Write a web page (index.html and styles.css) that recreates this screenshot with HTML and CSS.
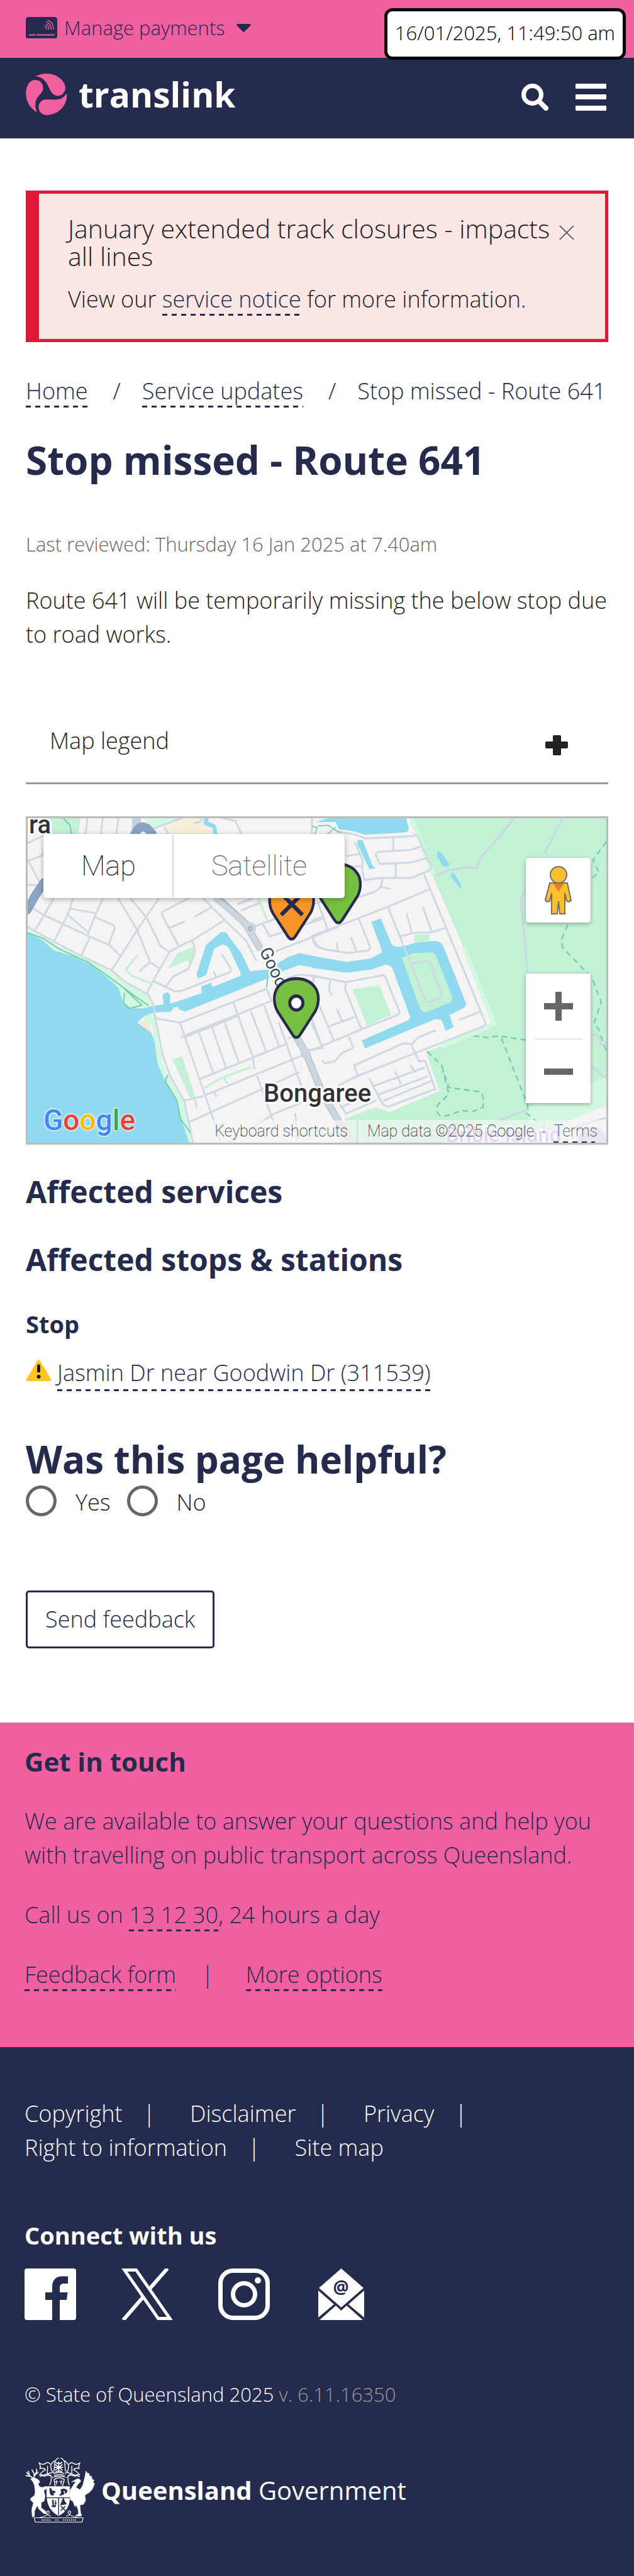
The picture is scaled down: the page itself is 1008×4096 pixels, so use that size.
FILE: index.html
```html
<!DOCTYPE html>
<html lang="en">
<head>
<meta charset="utf-8">
<meta name="viewport" content="width=device-width, initial-scale=1">
<title>Stop missed - Route 641 | Translink</title>
<link rel="stylesheet" href="styles.css">
</head>
<body>
<div class="topbar">
  <button class="payments" type="button">
    <svg class="payments-card" viewBox="0 0 176 122" aria-hidden="true">
      <rect width="176" height="122" rx="15" fill="#252b4d"/>
      <g fill="none" stroke="#f060a1" stroke-width="5" stroke-linecap="round">
        <path d="M20 100H52M64 100H158" stroke-width="7"/>
        <path d="M106 52q12 4 10 17M112 40q18 7 16 29M117 29q26 10 24 40M122 18q36 14 32 50"/>
      </g>
    </svg>
    <span>Manage payments</span>
    <svg class="payments-caret" viewBox="0 0 23 13" aria-hidden="true"><path d="M2 0H21Q24 0 22 3L13 12Q11.500 14 10 12L1 3Q-1 0 2 0Z" fill="#252b4d"/></svg>
  </button>
  <time class="clock">16/01/2025, 11:49:50 am</time>
</div>

<header class="header">
  <a class="brand" href="#">
    <svg class="brand-mark" viewBox="24 362 232 234" aria-hidden="true" fill="#f060a1">
      <path d="M78 380C95 368 115 362 140 362C200 362 248 405 246 445C244 470 225 488 200 487C175 485 163 462 152 438C138 405 115 378 78 380Z"/>
      <path d="M76 398C105 398 122 420 121 445C119 470 96 482 84 505C73 528 76 555 86 580C50 560 24 520 24 478C24 435 40 398 76 398Z"/>
      <path d="M254 474C262 540 205 596 140 596C112 595 95 575 95 550C96 525 115 508 140 507C185 507 225 520 254 474Z"/>
    </svg>
    <span>translink</span>
  </a>
  <div class="header-tools">
    <button type="button" aria-label="Search">
      <svg class="icon-search" viewBox="0 0 43 43" fill="none" stroke="#fff"><circle cx="17.500" cy="17.500" r="14" stroke-width="7"/><path d="M28 28L39 39" stroke-width="8" stroke-linecap="round"/></svg>
    </button>
    <button type="button" aria-label="Menu">
      <svg class="icon-menu" viewBox="0 0 49 43" fill="#fff"><rect width="49" height="8" rx="1"/><rect y="17" width="49" height="8" rx="1"/><rect y="35" width="49" height="8" rx="1"/></svg>
    </button>
  </div>
</header>

<main class="main">
  <section class="alert" role="alert">
    <div class="alert-body">
      <p class="alert-title">January extended track closures - impacts all lines</p>
      <p>View our <a class="link" href="#">service notice</a> for more information.</p>
    </div>
    <button class="alert-close" type="button" aria-label="Close">
      <svg viewBox="0 0 24 26" fill="none"><path d="M1 4L23 25M23 4L1 25" stroke="#fff" stroke-width="2"/><path d="M1 1L23 23M23 1L1 23" stroke="#666" stroke-width="2"/></svg>
    </button>
  </section>

  <nav aria-label="Breadcrumb">
    <ol class="crumbs">
      <li><a class="link" href="#">Home</a></li>
      <li><a class="link" href="#">Service updates</a></li>
      <li>Stop missed - Route 641</li>
    </ol>
  </nav>

  <h1>Stop missed - Route 641</h1>
  <p class="reviewed">Last reviewed: Thursday 16 Jan 2025 at 7.40am</p>
  <p class="intro">Route 641 will be temporarily missing the below stop due to road works.</p>

  <button class="legend" type="button" aria-expanded="false">
    <span>Map legend</span>
    <svg viewBox="0 0 36 32" aria-hidden="true" fill="#222"><rect x="12" width="13" height="32" rx="2"/><rect y="10" width="36" height="11" rx="2"/></svg>
  </button>

  <section class="map" aria-label="Map">
    <svg class="map-canvas" viewBox="3 3 920 516" preserveAspectRatio="xMidYMid slice" aria-hidden="true">
      <defs>
        <path id="pin" d="M0 160C-10 160-16 152-22 142L-92 40C-112 5-112-40-92-66C-72-94-40-108 0-108S72-94 92-66C112-40 112 5 92 40L22 142C16 152 10 160 0 160Z"/>
      </defs>
      <rect width="926" height="522" fill="#f5f3f3"/>
      <g transform="translate(-41 -15.500) scale(.3272 .349)" fill="none" stroke-linecap="round" stroke-linejoin="round">
        <!-- parks and sand -->
        <g fill="#c3f1d5">
          <path d="M225 40H395L380 130H260Z"/>
          <path d="M600 840L620 825L700 855L740 905L690 908L655 922L615 918L600 890Z"/>
          <path d="M862 668L942 640V680L918 715L910 702L818 738Z"/>
          <path d="M838 1152L885 1138L950 1325L925 1328Z"/>
        </g>
        <path d="M665 680L612 742L640 770L725 802" stroke="#c3f1d5" stroke-width="10"/>
        <path d="M1255 420L1295 510M995 1280L1080 1235L1215 1188M1090 1240L1102 1260" stroke="#c3f1d5" stroke-width="10"/>
        <path d="M690 40H960L735 102Z" fill="#d3f8e2"/>
        <path d="M805 90L900 50H975L1030 110L1000 135H825Z" fill="#f7efdc"/>
        <path d="M133 560L260 625L420 690L590 785L720 855L745 920L770 1080L800 1200L890 1340L945 1550H880L870 1400L760 1200L740 1000L600 890L570 820L430 715L270 655L133 590Z" fill="#d3f8e2"/>
        <path d="M133 575L205 608L262 655L350 680L450 725L520 778L575 825L598 890L625 918L690 920L745 908L840 895L980 850L978 820L1025 802L1032 822L1165 772Q1172 765 1168 755L1118 655Q1105 628 1078 628L1040 648L1002 768L962 784L955 765L1000 632L1070 575Q1085 568 1100 575L1175 672L1215 750L1300 742L1400 685L1455 667L1568 690V740L1455 722L1350 758L1300 783L900 934L870 925L865 912L845 915L830 935L750 938L700 955L668 985L735 1030L752 1075L765 1170L800 1245L865 1350L880 1420L920 1535L925 1560H120Z" fill="#8fdaee"/>
        <path d="M678 985L700 972L722 985L735 1030L715 1018Z" fill="#f5e8cc"/>
        <path d="M790 855L815 845L828 860L824 905H795Z" fill="#8fdaee"/>
        <path d="M1005 40L1000 75L1040 90L1048 130" stroke="#8fdaee" stroke-width="20"/>
        <!-- forest and lagoon to the east -->
        <g transform="translate(1516 0)">
          <path d="M483 40H1450V1560H120L160 1422L310 1370L375 1392L620 1295L553 1118L893 995L752 650L740 650L580 300Z" fill="#c3f1d5"/>
          <path d="M483 50L585 300M742 650L885 990L640 1090" stroke="#d3f8e2" stroke-width="22"/>
          <path d="M1040 1370L1440 1230V1370L1120 1470L1050 1420Z" fill="#d3f8e2"/>
          <path d="M1200 1450L1440 1360V1560H1050Z" fill="#f5f3f3"/>
          <path d="M20 70L110 45H455L470 95Q470 115 450 118L260 128L190 110L130 103L115 70Z" fill="#8fdaee"/>
          <path d="M222 152H245L295 270L310 280L280 286L220 170Z" fill="#8fdaee"/>
          <path d="M608 205Q625 200 640 225L670 265L660 275L635 272L608 225ZM675 302Q690 300 700 318L725 355V378L680 325Z" fill="#8fdaee"/>
          <path d="M0 680L170 708L285 692L340 665L338 650L288 525L335 510L388 630Q410 645 450 635L500 620L600 612Q630 615 640 640L748 895Q750 910 735 918L668 950L688 1005L650 1022L630 972L600 968L258 1102L242 1065L470 972L478 960L390 735Q375 718 350 722L290 742L170 757L0 735Z" fill="#8fdaee"/>
          <path d="M437 690L490 668L580 664Q598 668 605 685L683 870Q683 888 665 895L555 937Q535 940 525 920Z" fill="#c3f1d5"/>
          <path d="M497 585L570 582V612L497 618ZM197 832L328 816L385 950L267 998Z" fill="#c3f1d5"/>
        </g>
        <!-- streets -->
        <g stroke="#cfd9e4" stroke-width="9">
          <path d="M133 168L215 130M133 250L205 222L215 190M133 240L190 340M133 355L180 360M133 548L260 615L395 680L540 745L610 800L718 855L742 895L755 965L790 1130L825 1225L895 1340L940 1540"/>
          <path d="M425 50L415 130M500 50L490 130M575 50L565 130M645 50V120M730 105L890 50M800 95L820 130M945 75L970 70L990 50M1070 50L1145 65L1175 130M1516 50V130"/>
          <path d="M155 460L215 495L430 590L530 630L585 680M170 565L260 420M260 618L330 490L355 420M340 465L460 485M325 490L428 572M428 580L460 500L500 420M465 505L550 540Q560 545 555 560L530 625M395 678L435 600M543 745L665 565L770 420M575 420L665 560L730 710L770 735M635 420L715 510L780 635L820 662M715 850L740 800L825 660L950 600L1095 515M790 480L1020 365M790 480L785 490L865 630M825 552L895 525M950 500L1025 460M990 420L1090 515L1195 610L1245 700M930 610Q955 650 945 670L915 740L840 775L808 820M745 795L850 842L880 840L1115 755Q1125 748 1120 735L1080 675M680 748L725 712M1040 755L1050 775"/>
          <path d="M760 965L875 985L1295 830L1320 885L880 1050M875 985L1035 1420L1070 1530M905 1048L1155 955M965 1025L1035 1210M1030 1005L1098 1190M1092 985L1160 1165M1135 895L1230 1145L1235 1195M1220 935L1292 1112M1285 910L1355 1090M975 1240L1395 1080M1355 985L1470 1290M990 1318L1230 1225L1480 1130M895 1340L990 1318M925 1435L1450 1212M1250 1230L1345 1480M1040 1300L1050 1320M945 1325L955 1368M1110 1530L1330 1400L1568 1310M1400 1055L1440 1045M1435 1400L1445 1520"/>
          <path d="M1155 445L1225 420M1175 472L1260 440M1240 545L1568 430M1280 540L1310 592L1568 510M1340 660L1640 550M1520 600Q1530 645 1568 645M1400 780L1460 765L1568 780M1525 780L1480 880M1480 880L1568 1100L1500 1110"/>
        </g>
        <g transform="translate(1516 0)" stroke="#cfd9e4" stroke-width="9">
          <path d="M130 115L200 125L260 145L490 135Q510 120 520 145L580 270Q580 290 560 295L480 325L340 325L255 335L245 290V240L210 165M170 225L235 215M180 275L245 270M395 145V198M320 207L480 197L530 182M320 207Q305 215 315 235L330 262L480 255L555 235M407 262V322M340 330Q345 370 300 390L170 430M340 368L378 374"/>
          <path d="M0 590L360 460L575 375M545 310L845 990Q845 998 830 1002L510 1120L215 1230L130 1270M370 460L480 715M480 715L560 702Q572 705 575 715L630 855Q630 868 615 873L570 892Q555 890 550 880L480 715M460 490L485 575M540 462L582 570M432 592L490 576L580 573L650 552M230 515L282 640Q282 655 270 657L175 667L60 650Q20 640 5 600M190 597L215 655M120 622L125 655M30 440L75 555M0 520L45 505"/>
          <path d="M0 770L165 800L345 768Q355 770 360 785L425 935Q425 945 415 950L240 1015L0 1110M165 800L160 830L240 1015M90 795Q75 830 95 858M10 780L0 830M20 870L105 1065M85 1000L205 960M122 925L145 975M0 990L45 1085M180 1050L200 1100L150 1120L110 1160L65 1170L50 1158M720 970L815 935M205 1180L440 1080Q475 1075 485 1090L520 1160M205 1180L225 1230M480 1085L520 1050L600 1020"/>
          <path d="M280 1240L340 1350Q355 1370 375 1366L590 1290M520 1160L550 1160L600 1290M330 1310L560 1230M350 1340L580 1250M295 1275L545 1190M405 1210L430 1260M480 1180L500 1210M120 1330L165 1400L310 1340M140 1370L290 1310M1280 1460L1440 1415"/>
          <path d="M980 50Q940 110 850 200L820 235L800 280L740 277L660 292L610 312M1220 50L1130 210M1045 370Q1010 410 1018 460L1050 770M1350 1180L1440 1245M1350 1050Q1390 1020 1400 1065T1440 1060M880 1440L1050 1380" stroke="#cbd6e2"/>
        </g>
        <!-- main road -->
        <path d="M1060 420L1190 530L1260 640M1440 1050L1485 1120L1568 1310L1680 1490L1730 1550" stroke="#aeb9c6" stroke-width="34"/>
        <path d="M1050 420L1190 530L1260 640M1440 1050L1485 1120L1568 1310L1680 1490L1730 1550" stroke="#cbd5df" stroke-width="28"/>
        <path d="M665 50L668 110" stroke="#c4d0df" stroke-width="38"/>
        <circle cx="1216" cy="555" r="28" fill="#cbd5df"/><circle cx="1216" cy="555" r="8" stroke="#9aa8ba" stroke-width="5"/>
        <circle cx="1485" cy="1123" r="25" fill="#cbd5df"/>
        <path d="M655 125Q690 60 740 125M133 470L175 400L215 345" stroke="#8ba4c0" stroke-width="42"/>
        <!-- walking tracks -->
        <g stroke="#76cdae" stroke-width="6">
          <path d="M133 575L210 600L290 650L430 710L520 770L600 825L650 860L720 905M605 850L600 895L630 920L690 905L645 865L610 835M815 1225Q795 1250 815 1270L860 1340L875 1420L925 1485M305 50L340 85L348 130M1300 785L1296 820"/>
        </g>
        <g transform="translate(1516 0)" stroke="#76cdae" stroke-width="7">
          <path d="M0 90L25 95L15 125M30 88L80 85L110 105L140 120M115 95L75 125" stroke-width="5"/>
          <path stroke-dasharray="27 19" stroke-linecap="butt" d="M560 1115L630 1180L665 1280L820 1300Q840 1330 830 1370L780 1390L730 1385L640 1412Q600 1410 610 1360L665 1310L635 1200M785 1045L850 1052L910 1045L1045 1065M920 1055L1050 1365L1040 1395L1110 1450M1430 160L1365 245L1395 300L1355 330M1243 538L1210 610L1220 645L1360 780L1405 890L1370 990L1390 1010L1440 1140"/>
        </g>
        <circle cx="2878" cy="1528" r="70" fill="#d3bbfa"/>
      </g>
      <g class="map-labels">
        <text x="5" y="27" class="place">ra</text>
        <text x="378" y="454" class="place">Bongaree</text>
        <text class="street" transform="translate(371 214) rotate(64)">Good</text>
        <text x="668" y="518" class="poi">Bribie Island</text>
      </g>
      <g transform="translate(-41 -15.500) scale(.3272 .349)" stroke="#252b4d" stroke-width="13">
        <use href="#pin" x="1644" y="370" fill="#78c041"/>
        <use href="#pin" x="1417" y="444" fill="#f99527"/>
        <path d="M1366 396L1470 494M1470 396L1366 494" stroke-width="19"/>
        <use href="#pin" x="1440" y="892" fill="#78c041"/>
        <circle cx="1440" cy="895" r="32" fill="#fff" stroke-width="15"/>
      </g>
    </svg>

    <div class="map-types">
      <button type="button">Map</button>
      <button type="button">Satellite</button>
    </div>

    <div class="map-tools">
      <button class="pegman" type="button" aria-label="Street View">
        <svg viewBox="0 0 44 78" fill="#fdbf2d" stroke="#707070" stroke-width="2">
          <path d="M8 27H36L42 54Q40 58 35 56L32 43V76H24L22 56L20 76H11V43L8 56Q3 58 1 54Z"/>
          <path d="M14 28H30L22 41Z" fill="#e17f30" stroke="none"/>
          <circle cx="22" cy="14" r="13"/>
        </svg>
      </button>
      <div class="zoom">
        <button type="button" aria-label="Zoom in"><svg viewBox="0 0 46 46" fill="#666"><path d="M0 18H18V0H28V18H46V28H28V46H18V28H0Z"/></svg></button>
        <button type="button" aria-label="Zoom out"><svg viewBox="0 0 46 46" fill="#666"><path d="M0 18H46V28H0Z"/></svg></button>
      </div>
    </div>

    <div class="google">
      <span class="g-blue">G</span><span class="g-red">o</span><span class="g-yellow">o</span><span class="g-blue">g</span><span class="g-green">l</span><span class="g-red">e</span>
    </div>
    <div class="map-credits">
      <button type="button">Keyboard shortcuts</button>
      <span>Map data ©2025 Google</span>
      <a class="link" href="#">Terms</a>
    </div>
  </section>

  <h2>Affected services</h2>
  <h2>Affected stops &amp; stations</h2>
  <h3>Stop</h3>
  <ul class="stops">
    <li>
      <svg viewBox="0 0 41 34" aria-hidden="true"><path d="M18 2Q20.500-1.500 23 2L40 31Q41 34 38 34H3Q0 34 1 31Z" fill="#ffc425"/><path d="M20.500 10V18" stroke="#111" stroke-width="5" stroke-linecap="round"/><circle cx="20.500" cy="27" r="3" fill="#111"/></svg>
      <a class="link" href="#">Jasmin Dr near Goodwin Dr (311539)</a>
    </li>
  </ul>

  <form class="feedback">
    <fieldset>
      <legend>Was this page helpful?</legend>
      <div class="choices">
        <input type="radio" name="helpful" id="helpful-yes"><label for="helpful-yes">Yes</label>
        <input type="radio" name="helpful" id="helpful-no"><label for="helpful-no">No</label>
      </div>
    </fieldset>
    <button class="send" type="button">Send feedback</button>
  </form>
</main>

<section class="contact">
  <h2>Get in touch</h2>
  <p>We are available to answer your questions and help you with travelling on public transport across Queensland.</p>
  <p>Call us on <a class="link" href="#">13 12 30</a>, 24 hours a day</p>
  <ul class="contact-links">
    <li><a class="link" href="#">Feedback form</a></li>
    <li><a class="link" href="#">More options</a></li>
  </ul>
</section>

<footer class="footer">
  <ul class="footer-links">
    <li><a href="#">Copyright</a></li>
    <li><a href="#">Disclaimer</a></li>
    <li><a href="#">Privacy</a></li>
    <li><a href="#">Right to information</a></li>
    <li><a href="#">Site map</a></li>
  </ul>
  <h2>Connect with us</h2>
  <div class="social">
    <a href="#" aria-label="Facebook"><svg viewBox="0 0 82 82"><rect width="82" height="82" rx="4" fill="#fff"/><path d="M44 82V50H33V38H44V30C44 18 50 12.500 60 12.500H69V24H63C58 24 56 26 56 31V38H68.500L67 50H56V82Z" fill="#252b4d"/></svg></a>
    <a href="#" aria-label="X"><svg viewBox="0 0 84 84" fill="none" stroke="#fff" stroke-width="5"><path d="M5 2.500H24L79 81.500H60Z"/><path d="M75 0L46 33M3 84L35 47" stroke-width="6"/></svg></a>
    <a href="#" aria-label="Instagram"><svg viewBox="0 0 82 82" fill="none" stroke="#fff" stroke-width="7"><rect x="3.500" y="3.500" width="75" height="75" rx="20"/><circle cx="41" cy="41" r="17.500"/><circle cx="63" cy="19" r="5" fill="#fff" stroke="none"/></svg></a>
    <a href="#" aria-label="Email newsletter"><svg viewBox="-5 0 82 82" fill="#fff"><path d="M36.500 0L72 31L36.500 62L1 31ZM0 35L25 57L0 78ZM73 35L48 57L73 78ZM2 82L28 59L36.500 67L45 59L71 82Z"/><text class="at" x="36" y="40" text-anchor="middle">@</text></svg></a>
  </div>
  <p class="copyright">© State of Queensland 2025 <span>v. 6.11.16350</span></p>
  <a class="government" href="#">
    <svg viewBox="12 20 396 372" aria-hidden="true" fill="#fff" stroke="#fff" stroke-linecap="round" stroke-linejoin="round">
      <!-- mantling and helmet -->
      <g fill="none" stroke-width="5">
        <path d="M200 25Q184 34 180 50L176 98M214 25Q232 34 236 50L240 98M92 52Q112 68 130 54Q144 44 158 62L160 92L178 112M92 52Q104 76 96 84Q120 78 128 92Q112 96 94 120Q120 116 118 128Q142 118 160 122M322 52Q300 68 284 54Q270 46 258 62L256 92L240 112M322 52Q310 76 318 84Q294 78 286 92Q302 96 320 120Q296 116 296 128Q272 118 256 122M140 70L138 112L168 136M276 70V110L248 136M160 60L178 40M254 60L238 40M98 128L170 104M320 130L246 104M152 176Q162 150 160 138M262 176Q252 154 256 138"/>
        <path d="M202 48V100M184 62L222 92M222 62L184 92M182 77H224M186 50Q202 64 220 50M186 103Q204 92 220 103" stroke-width="6"/>
        <path d="M178 112Q204 100 232 112M178 124Q204 112 234 124M174 132Q204 122 238 132M182 182L176 146Q204 126 234 146L224 182"/>
        <path d="M190 150V174M182 158H198M216 150V174M208 158H224" stroke-width="4"/>
      </g>
      <!-- red deer -->
      <path stroke-width="2" d="M44 142L62 136L80 142L92 152L96 162L86 170L94 186Q108 194 118 188L134 184V198L118 208L126 240L120 268L104 276L104 306L126 322L134 340L118 338L90 312L82 292L66 324L66 354L54 358L50 318L60 278L44 262V252L66 236L70 216L66 180L58 160Z"/>
      <path fill="none" stroke-width="6" d="M58 138Q34 124 22 106M42 128L18 124M36 120L32 100M64 136L64 112L52 92M66 126L80 98L76 88M70 120L86 106"/>
      <!-- brolga -->
      <path stroke-width="2" d="M404 170L396 160L402 150L390 144L388 128L376 126L374 112L364 110L356 98L348 140L338 178L322 204L300 190L310 174L326 158Q328 142 306 142L274 160L300 156L286 176L268 204L264 240L270 262L282 268L294 300L300 288L312 318L314 340L296 350L326 354L332 344L326 336L322 290L342 286L354 264L350 234L376 218L392 200Z"/>
      <!-- shield -->
      <path stroke-width="3" d="M136 186H264V250Q262 320 202 350Q142 320 136 250Z"/>
      <g stroke="#252b4d" fill="#252b4d" stroke-width="3">
        <path d="M136 249H264M202 249V344" fill="none" stroke-width="5"/>
        <path d="M152 196Q150 218 158 232Q166 240 176 230L170 222L184 218L178 210L164 212L162 200ZM208 236L218 218L214 204Q234 192 250 208Q250 226 236 222L242 212L228 210L232 228ZM166 264L168 286L174 288L172 262ZM184 264L182 288L188 284ZM164 292H186L184 300H168ZM228 250L220 270L212 290L246 284L236 268Z"/>
        <path d="M216 298L238 320M238 298L216 320" fill="none" stroke-width="6"/>
      </g>
      <!-- scroll -->
      <g fill="none" stroke-width="4">
        <path d="M64 362H340L334 386H70ZM96 360Q146 350 150 330Q144 318 134 328Q138 350 158 352M308 360Q258 350 254 330Q260 318 270 328Q266 350 246 352"/>
        <path d="M106 374H160M184 374H206M228 374H302" stroke-width="7" stroke-dasharray="5 6" stroke-linecap="butt"/>
      </g>
    </svg>
    <span><b>Queensland</b> Government</span>
  </a>
</footer>
</body>
</html>
```
FILE: styles.css
```css
* {
  box-sizing: border-box;
}

body {
  margin: 0;
  background: #fff;
  color: #222;
  font: 300 36px/54px "Open Sans", "Noto Sans", sans-serif;
}

h1, h2, h3, p, ul, ol, fieldset {
  margin: 0;
  padding: 0;
}

ul, ol {
  list-style: none;
}

a {
  color: inherit;
  text-decoration: none;
}

button {
  margin: 0;
  padding: 0;
  border: 0;
  background: none;
  color: inherit;
  font: inherit;
  cursor: pointer;
}

svg {
  display: block;
  flex: none;
}

h1, h2, h3, legend {
  color: #252b4d;
  font-weight: 700;
}

.link {
  padding-bottom: 2px;
  background: repeating-linear-gradient(90deg, #252b4d 0 8px, transparent 8px 15px) 0 100% / 100% 3px no-repeat;
  color: #252b4d;
}

/* Top bar */
.topbar {
  position: relative;
  display: flex;
  padding: 22px 41px 26px;
  background: #f060a1;
}

.payments {
  display: flex;
  align-items: center;
  color: #252b4d;
  font-size: 31px;
  line-height: 44px;
}

.payments-card {
  width: 50px;
  margin-right: 11px;
}

.payments-caret {
  width: 23px;
  margin-left: 18px;
}

.clock {
  position: absolute;
  top: 13px;
  right: 13px;
  padding: 12px 12px 16px;
  border: 5px solid #000;
  border-radius: 13px;
  background: #fff;
  color: #000;
  font-size: 31px;
  line-height: 44px;
}

/* Header */
.header {
  display: flex;
  justify-content: space-between;
  padding: 25px 44px 37px 41px;
  background: #252b4d;
}

.brand {
  display: flex;
  gap: 18px;
  color: #fff;
  font-size: 55px;
  font-weight: 700;
  line-height: 66px;
}

.brand-mark {
  width: 66px;
  height: 66px;
}

.header-tools {
  display: flex;
  align-items: center;
  gap: 43px;
  padding-top: 8px;
}

.icon-search {
  width: 43px;
}

.icon-menu {
  width: 49px;
}

/* Main column */
.main {
  padding: 83px 41px 118px;
}

.alert {
  position: relative;
  padding: 33px 80px 36px 46px;
  border: 5px solid #e41836;
  border-left-width: 21px;
  background: #fae6e4;
}

.alert-title {
  margin-bottom: 20px;
  font-size: 41px;
  line-height: 44px;
}

.alert-close {
  position: absolute;
  top: 50px;
  right: 49px;
}

.alert-close svg {
  width: 24px;
}

.crumbs {
  display: flex;
  flex-wrap: wrap;
  margin-top: 51px;
  color: #252b4d;
}

.crumbs li + li::before {
  content: "/";
  margin: 0 34px 0 40px;
}

h1 {
  margin-top: 46px;
  font-size: 62px;
  line-height: 72px;
}

.reviewed {
  margin-top: 76px;
  color: #666;
  font-size: 31px;
  line-height: 44px;
}

.intro {
  margin-top: 41px;
}

.legend {
  display: flex;
  align-items: center;
  justify-content: space-between;
  width: 100%;
  margin-top: 75px;
  padding: 40px 64px 39px 38px;
  border-bottom: 3px solid #999;
}

.legend svg {
  width: 36px;
  margin-top: 14px;
}

/* Map */
.map {
  position: relative;
  height: 522px;
  margin-top: 51px;
  overflow: hidden;
  border: 3px solid #bbb;
  font-family: Roboto, sans-serif;
  font-weight: 100;
}

.map-canvas {
  width: 100%;
  height: 100%;
}

.map-labels {
  font-family: Roboto, sans-serif;
  font-weight: 500;
  paint-order: stroke;
  stroke: #fff;
  stroke-width: 6px;
  stroke-linejoin: round;
}

.place {
  fill: #303236;
  font-size: 40px;
}

.street {
  fill: #3c4a5c;
  font-size: 28px;
  font-weight: 400;
}

.poi {
  fill: #b48ee8;
  font-size: 33px;
}

.map-types {
  position: absolute;
  top: 25px;
  left: 25px;
  display: flex;
  overflow: hidden;
  border-radius: 5px;
  background: #fff;
  box-shadow: 0 2px 8px rgba(0, 0, 0, .3);
  color: #000;
  font-size: 45px;
  line-height: 102px;
}

.map-types button {
  padding: 0 60px;
}

.map-types button + button {
  box-shadow: -1px 0 3px rgba(0, 0, 0, .25);
  color: #565656;
}

.map-tools {
  position: absolute;
  top: 63px;
  right: 25px;
  width: 103px;
}

.map-tools button {
  display: grid;
  place-items: center;
  width: 100%;
  height: 103px;
  background: #fff;
}

.map-tools .pegman {
  border-radius: 5px;
  box-shadow: 0 2px 6px rgba(0, 0, 0, .3);
}

.pegman svg {
  width: 44px;
}

.zoom {
  margin-top: 81px;
  background: #fff;
  box-shadow: 0 2px 6px rgba(0, 0, 0, .3);
}

.zoom svg {
  width: 46px;
}

.zoom button + button::before {
  content: "";
  align-self: start;
  width: 77px;
  height: 2px;
  background: #e6e6e6;
}

.zoom button + button {
  grid-template-rows: 2px 1fr;
}

.google {
  position: absolute;
  bottom: 8px;
  left: 25px;
  display: flex;
  font-size: 46px;
  font-weight: 500;
  line-height: 56px;
  text-shadow: 0 0 3px #fff, 0 0 3px #fff, 0 0 3px #fff;
}

.g-blue { color: #4285f4; }
.g-red { color: #ea4335; }
.g-yellow { color: #fbbc05; }
.g-green { color: #34a853; }

.map-credits {
  position: absolute;
  right: 0;
  bottom: 0;
  display: flex;
  gap: 3px;
  color: #000;
  font-size: 25px;
  line-height: 36px;
}

.map-credits > * {
  padding: 0 14px;
  background-color: rgba(245, 245, 245, .7);
}

.map-credits .link {
  background-position: 14px 100%;
  background-size: 66px 2px;
  color: #222;
}

/* Affected stops */
.main h2 {
  margin-top: 43px;
  font-size: 48px;
  line-height: 64px;
}

.main h2 + h2 {
  margin-top: 44px;
}

h3 {
  margin-top: 43px;
  font-size: 38px;
  line-height: 54px;
}

.stops {
  margin-top: 24px;
}

.stops li {
  display: flex;
  align-items: flex-start;
  gap: 9px;
}

.stops svg {
  width: 41px;
  margin-top: 6px;
}

/* Feedback */
fieldset {
  min-width: 0;
  border: 0;
}

.feedback {
  margin-top: 72px;
}

legend {
  padding: 0;
  font-size: 60px;
  line-height: 72px;
}

.choices {
  display: flex;
  align-items: flex-start;
  padding-top: 6px;
}

.choices input {
  appearance: none;
  width: 49px;
  height: 49px;
  margin: 0 30px 0 0;
  border: 5px solid #666;
  border-radius: 50%;
}

.choices label {
  margin-right: 26px;
}

.send {
  margin-top: 113px;
  padding: 0 28px;
  border: 3px solid #252b4d;
  border-radius: 5px;
  color: #252b4d;
  line-height: 86px;
}

/* Get in touch */
.contact {
  padding: 35px 39px 88px;
  background: #f060a1;
  color: #252b4d;
}

.contact h2 {
  font-size: 42px;
  line-height: 54px;
}

.contact p,
.contact ul {
  margin-top: 41px;
}

.contact-links,
.footer-links {
  display: flex;
  flex-wrap: wrap;
}

.contact-links li + li::before {
  content: "|";
  margin: 0 51px 0 40px;
}

/* Footer */
.footer {
  padding: 79px 39px 86px;
  background: #252b4d;
  color: #fff;
}

.footer-links {
  max-width: 840px;
}

.footer-links li {
  margin-right: 55px;
}

.footer-links li:not(:last-child)::after {
  content: "|";
  margin-left: 33px;
}

.footer h2 {
  margin-top: 85px;
  color: #fff;
  font-size: 38px;
  line-height: 54px;
}

.social {
  display: flex;
  gap: 72px;
  margin-top: 26px;
}

.social svg {
  width: 82px;
  height: 82px;
}

.at {
  fill: #252b4d;
  font-size: 28px;
  font-weight: 700;
}

.copyright {
  margin-top: 96px;
  font-size: 31px;
  line-height: 44px;
}

.copyright span {
  color: #999;
}

.government {
  display: flex;
  align-items: center;
  gap: 9px;
  margin-top: 78px;
  font-size: 40px;
  font-weight: 400;
}

.government svg {
  width: 113px;
  height: 105px;
}

.government b {
  font-weight: 700;
}
```
